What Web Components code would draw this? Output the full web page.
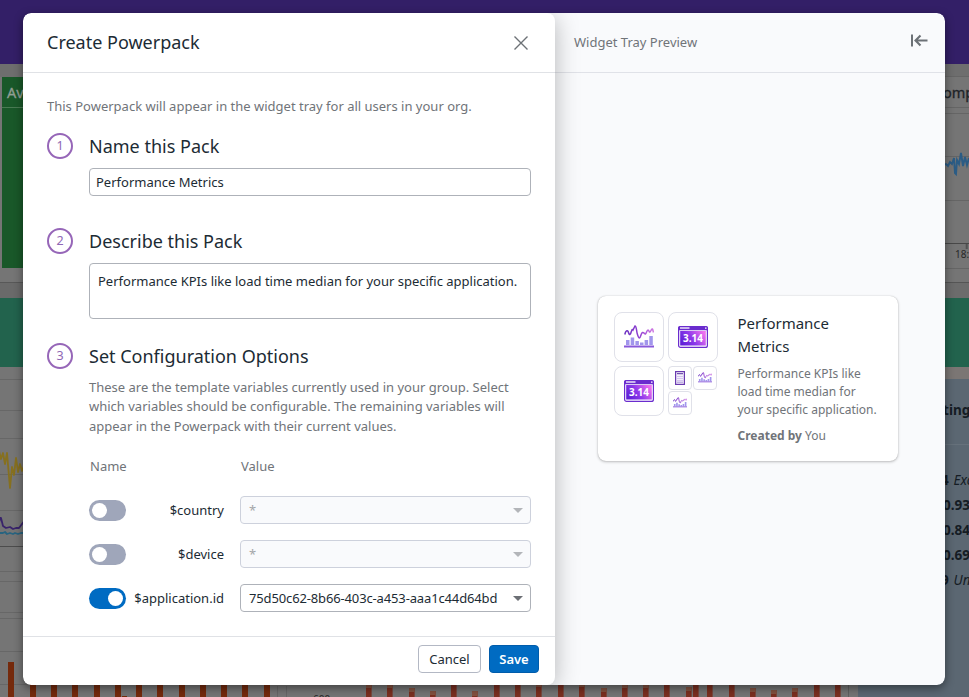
<!DOCTYPE html>
<html lang="en">
<head>
<meta charset="utf-8">
<title>Create Powerpack</title>
<style>
html,body{margin:0;height:100%;overflow:hidden}
body{font-family:"Noto Sans","Open Sans",sans-serif;font-size:13px;color:#1c2b34}
</style>
</head>
<body>
<app-stage></app-stage>
<script>
const define=(name,html,setup)=>customElements.define(name,class extends HTMLElement{
  connectedCallback(){
    if(this.shadowRoot)return;
    const root=this.attachShadow({mode:'open'});
    root.innerHTML=typeof html==='function'?html(this):html;
    if(setup)setup(this,root);
  }
});

/* Dimmed dashboard: a free canvas of chart fragments */
define('dash-backdrop',()=>{
  const left=[[8,662],[30,680],[51,680],[72,680],[94,680],[115,680],[136,680],[157,680],[179,680],[200,680],[221,680],[242,680],[264,680]]
    .map(([x,y])=>`<rect x="${x}" y="${y}" width="6" height="${697-y}" fill="#752a0c"/>`).join('')+'<rect x="122" y="696" width="5" height="1" fill="#752a0c"/>';
  const right=[[366,685,3],[387,685,3],[409,688,4],[430,691,4],[451,680,0],[472,691,5],[494,680,0],[515,680,0],[536,685,2],[558,680,0],[579,685,2],[601,688,4],[622,684,4],[643,684,4],[664,680,0],[686,687,4],[693,680,0],[707,680,0],[729,680,0],[750,688,4],[771,690,4],[792,688,4],[814,680,0],[835,680,0]]
    .map(([x,y,t])=>`<rect x="${x}" y="${y}" width="5.6" height="${697-y}" fill="#7b2f20"/>`+(t?`<rect x="${x}" y="${y}" width="5.6" height="${t}" fill="#835240"/>`:'')).join('');
  return `<style>
:host{display:block;position:absolute;inset:0}
svg{display:block;width:969px;height:697px}
</style>
<svg viewBox="0 0 969 697" font-family="Noto Sans, sans-serif">
<rect width="969" height="697" fill="#757575"/>
<rect width="969" height="64" fill="#331f67"/>
<rect y="64" width="969" height="13" fill="#6e6e6e"/>
<rect x="2" y="77" width="60" height="191" fill="#195829"/>
<path d="M2 107.5H40" stroke="#497b53"/>
<text x="7" y="98" font-size="14.5" fill="#929e94" stroke="#929e94" stroke-width=".3">Av</text>
<path d="M0 282.5H60" stroke="#585858"/><rect y="283" width="60" height="15" fill="#6a6a6a"/>
<rect y="298" width="60" height="69" fill="#22634d"/>
<g stroke="#676767"><path d="M0 379.5H60M0 410.5H60M0 438.5H60M0 474.5H60M0 510.5H60M0 571.5H60M0 581.5H60M0 612.5H60M0 618.5H60M0 651.5H60M0 684.5H60"/></g>
<path d="M0 546.5H60" stroke="#4c4c4c"/>
<g fill="none" stroke-width="1.8" stroke-linejoin="round">
<path d="M-2 447l3 12 2-6 2 11 2-11 3 35 2-21 2 8 2-17 2 14 2-8 2 7 2-5 2-13 2-5" stroke="#86701f"/>
<path d="M-1 523l1-5 1 0 2 8 3 2 4-1 3 2 3-1 3 0 3-4 3-4" stroke="#39246b"/>
<path d="M0 533h3l2-1 2 2 3-1 3 1 2-1 3 1 3-1h5" stroke="#286480"/>
</g>
${left}
<path d="M277.5 686V697M286.5 686V697" stroke="#676767"/>
<text x="313" y="703" font-size="10" fill="#252525">600</text>
${right}
<path d="M848.500 684V697" stroke="#606060"/>
<g stroke="#656565"><path d="M940 76.500H969M940 107.500H969M940 113.500H969M940 156.500H969M940 200.500H969M940 268.500H969"/><path d="M940 282.500H969" stroke="#555"/></g>
<path d="M940 243.500H969" stroke="#484848"/><path d="M966.700 244V249" stroke="#525252" stroke-width="2"/>
<text x="943" y="98" font-size="14.500" fill="#1f2428" stroke="#1f2428" stroke-width=".3">omp</text>
<path d="M943 165l3-1 2 2 2-4 2 2 2-6 1 15 1 1 1-14 2 4 2-11 2 13 2-9 2 8 2-7" fill="none" stroke="#2b5c85" stroke-width="1.900"/>
<text x="955" y="258" font-size="10" fill="#282828">18:</text>
<rect x="940" y="283" width="29" height="15" fill="#6c6c6c"/>
<rect x="940" y="298" width="29" height="69" fill="#22634d"/>
<rect x="940" y="367" width="29" height="13" fill="#7b7674"/>
<path d="M940 379h29V697H858V670h82z" fill="#5b6772"/>
<path d="M940 444.500H969" stroke="#66717b"/>
<g font-size="13.500" font-weight="700" fill="#151c24">
<text x="935" y="415">ating</text>
<text x="941" y="485">4</text><text x="943" y="510">0.93</text><text x="943" y="535">0.84</text><text x="943" y="560">0.69</text><text x="941" y="585">9</text>
<g font-weight="400" font-style="italic"><text x="953.500" y="485">Exc</text><text x="953.500" y="585">Un</text></g>
</g>
</svg>`});

define('icon-button',e=>{
  const icons={
    close:'<path d="M1.500 1.500L14.500 14.500M14.500 1.500L1.500 14.500" stroke-width="1.400"/>',
    collapse:'<path d="M1 1.500V13.500" stroke-width="2"/><path d="M16.500 7.500H4.800M9.500 2.500L4.500 7.500L9.500 12.500" stroke-width="2.100"/>'
  };
  const k=e.getAttribute('icon');
  return `<style>:host{display:block}svg{display:block}</style><svg width="${k==='close'?16:17}" height="16" viewBox="0 0 ${k==='close'?16:17} 16" fill="none" stroke="#6c7176">${icons[k]}</svg>`});

define('pack-step',e=>`<style>
:host{display:grid;grid-template-columns:26px 1fr;column-gap:16px}
.n{box-sizing:border-box;width:26px;height:26px;border:2px solid #9666b8;border-radius:50%;color:#8f67b5;display:flex;align-items:center;justify-content:center;font-size:12.5px;line-height:22px}
h3{margin:0;font-size:18px;font-weight:400;line-height:26px}
.c{grid-column:2;min-width:0}
</style><div class="n">${e.getAttribute('number')}</div><h3>${e.getAttribute('heading')}</h3><div class="c"><slot></slot></div>`);

define('text-field',`<style>
:host{display:block;box-sizing:border-box;height:var(--h,28px);border:1px solid #aeb2b9;border-radius:4px;background:#fff;padding:var(--p,0 6px);line-height:26px;white-space:nowrap}
</style><slot></slot>`);

define('toggle-switch',`<style>
:host{display:block;box-sizing:border-box;width:37px;height:21px;border-radius:11px;background:#9fa6ba;padding:3px}
i{display:block;width:15px;height:15px;border-radius:50%;background:#fff}
:host([on]){background:#006bc2}
:host([on]) i{margin-left:16px}
</style><i></i>`);

define('select-box',`<style>
:host{box-sizing:border-box;display:flex;align-items:center;justify-content:space-between;height:28px;border:1px solid #aeb2b9;border-radius:4px;padding:0 7.5px 0 8px;line-height:26px;color:#1c2b34;background:#fff;letter-spacing:-.14px}
:host([disabled]){background:#f9fafc;border-color:#cdd1dc;color:#a4a6a9}
i{border:5px solid transparent;border-top:5px solid #6c6f75;border-bottom:0}
:host([disabled]) i{border-top-color:#b3b5b9}
</style><span><slot></slot></span><i></i>`);

define('variable-row',e=>`<style>
:host{display:grid;grid-template-columns:37px 98px 291px;column-gap:0;align-items:center;height:28px}
span{text-align:right;white-space:nowrap}
select-box{margin-left:16px;width:291px}
</style><toggle-switch ${e.hasAttribute('on')?'on':''}></toggle-switch><span>${e.getAttribute('name')}</span><select-box ${e.hasAttribute('on')?'':'disabled'}><slot></slot></select-box>`);

define('push-button',`<style>
:host{box-sizing:border-box;display:flex;align-items:center;justify-content:center;height:28px;width:63px;border:1px solid #b3b8c4;border-radius:4px;background:#fff}
:host([primary]){width:50px;background:#006bc2;border-color:#005cab;color:#fff;font-weight:600}
</style><slot></slot>`);

define('powerpack-form',`<style>
:host{box-sizing:border-box;display:flex;flex-direction:column;width:532px;height:672px;background:#fff;border-radius:8px;box-shadow:0 4px 24px rgba(0,0,0,.28);position:relative;z-index:1}
header{box-sizing:border-box;height:60px;border-bottom:1px solid #e0e2e6;display:flex;align-items:center;justify-content:space-between;padding:0 26px 0 24px;font-size:18px}
header span{padding-bottom:2px}
main{flex:1;padding:23px 24px 0}
.intro{line-height:20px;height:20px;margin:0 0 17px;color:#707479;white-space:nowrap}
text-field{margin-top:9px}
.desc{margin:8.500px 0 20px;line-height:19.500px;color:#707479;white-space:nowrap}
.cols{display:grid;grid-template-columns:151px 1fr;line-height:20px;color:#707479;padding-left:1px;margin-bottom:20px}
.rows{display:grid;gap:16px}
footer{box-sizing:border-box;height:49px;border-top:1px solid #e0e2e6;display:flex;justify-content:flex-end;gap:8px;padding:8px 16px}
</style>
<header><span>Create Powerpack</span><icon-button icon="close"></icon-button></header>
<main>
<p class="intro">This Powerpack will appear in the widget tray for all users in your org.</p>
<pack-step number="1" heading="Name this Pack"><text-field>Performance Metrics</text-field></pack-step>
<pack-step number="2" heading="Describe this Pack" style="margin-top:32px"><text-field style="--h:56px;--p:4px 8px">Performance KPIs like load time median for your specific application.</text-field></pack-step>
<pack-step number="3" heading="Set Configuration Options" style="margin-top:24px">
<p class="desc">These are the template variables currently used in your group. Select<br>which variables should be configurable. The remaining variables will<br>appear in the Powerpack with their current values.</p>
<div class="cols"><span>Name</span><span>Value</span></div>
<div class="rows">
<variable-row name="$country">*</variable-row>
<variable-row name="$device">*</variable-row>
<variable-row name="$application.id" on>75d50c62-8b66-403c-a453-aaa1c44d64bd</variable-row>
</div>
</pack-step>
</main>
<footer><push-button>Cancel</push-button><push-button primary>Save</push-button></footer>`);

define('widget-tile',e=>{
  const small=e.hasAttribute('small'),k=e.getAttribute('kind');
  const art={
  chart:`<svg width="${small?14:30}" height="${small?11:24}" viewBox="0 0 30 24" preserveAspectRatio="none"><defs><linearGradient id="g"><stop stop-color="#6a2fc0"/><stop offset=".5" stop-color="#9040d2"/><stop offset="1" stop-color="#cf78e2"/></linearGradient></defs><path d="M.8 9.500C1.500 6 3.500 4 4.500 7.500S6.500 9.800 7.500 6Q8 3.500 9 5L11 1C12.500 1 12.500 6 13.200 8.500S14.500 13 15.500 13S17 8 18.500 7.500S20.500 9.500 21.500 9S22.800 5 24 5S25 7.500 26 7S27.500 3.500 28.300 4S29 6.500 29.500 7.500" fill="none" stroke="url(#g)" stroke-width="${small?2:1.500}"/><path d="M2 15h3.500v5H2zM6.700 12.500h3.500V20H6.700zM11.400 16h3.500v4h-3.500zM16 17.500h3.500V20H16zM20.600 15h3.500v5h-3.500zM25.300 11h3.500v9h-3.500z" fill="#a196ec"/><path d="M0 20.500h30v2H0z" fill="#8959da"/></svg>`,
  value:`<svg width="30" height="22" viewBox="0 0 30 22"><defs><linearGradient id="v" x1="0" y1=".7" x2="1" y2=".3"><stop stop-color="#5f20d8"/><stop offset=".45" stop-color="#8c38ea"/><stop offset="1" stop-color="#ee72ee"/></linearGradient></defs><rect x=".6" y=".6" width="28.800" height="20.800" rx="2" fill="#fff" stroke="#6a2cce" stroke-width="1.200"/><path d="M0 4.200V2Q0 0 2 0H28Q30 0 30 2V4.200z" fill="#6a2cce"/><path d="M2 2H11.500" stroke="#fff" stroke-width="1.300"/><path d="M27 2.200h1.500" stroke="#fff" stroke-width="1.300"/><rect x="2.200" y="5" width="25.600" height="14.500" fill="url(#v)"/><text x="15" y="16.400" text-anchor="middle" font-family="Noto Sans,sans-serif" font-weight="700" font-size="10" fill="#fff">3.14</text></svg>`,
  doc:`<svg width="10" height="14" viewBox="0 0 10 14"><rect x=".6" y=".6" width="8.800" height="12.800" fill="#f4effc" stroke="#6a3ab0" stroke-width="1.200"/><path d="M2 2.700h6" stroke="#54309c"/><path d="M2 5.500h6M2 7.500h6M2 9.500h6" stroke="#d4c5ef"/><path d="M2 11.200h6" stroke="#a993d9"/></svg>`};
  return `<style>
:host{box-sizing:border-box;display:flex;align-items:center;justify-content:center;width:50px;height:50px;border:1px solid #e0e1e9;border-radius:8px;background:#fff}
:host([small]){width:24px;height:24px;border-radius:4px}
svg{display:block}
</style>${art[k]}`});

define('pack-card',`<style>
:host{box-sizing:border-box;display:grid;grid-template-columns:104px 1fr;column-gap:19.5px;width:300px;height:165px;padding:16px 16px 0;border-radius:8px;background:#fff;box-shadow:0 0 1px rgba(0,0,0,.25),0 1px 3px rgba(0,0,0,.24)}
.tiles{display:grid;grid-template-columns:50px 50px;gap:4px;align-content:start}
.mini{display:grid;grid-template-columns:24px 24px;gap:1px;align-content:start}
h4{margin:0 0 7px;font-size:15px;line-height:23px;font-weight:400}
p{margin:0;font-size:12px;line-height:18px;color:#707479;white-space:nowrap}
.by{margin-top:8px}
b{font-weight:700}
</style>
<div class="tiles"><widget-tile kind="chart"></widget-tile><widget-tile kind="value"></widget-tile><widget-tile kind="value"></widget-tile>
<div class="mini"><widget-tile small kind="doc"></widget-tile><widget-tile small kind="chart"></widget-tile><widget-tile small kind="chart"></widget-tile></div></div>
<div><h4>Performance<br>Metrics</h4><p>Performance KPIs like<br>load time median for<br>your specific application.</p><p class="by"><b>Created by</b> You</p></div>`);

define('tray-preview',`<style>
:host{box-sizing:border-box;display:flex;flex-direction:column;width:398px;margin-left:-8px;height:672px;background:#f9fafc;border-radius:0 8px 8px 0}
header{box-sizing:border-box;height:60px;border-bottom:1px solid #e0e2e8;display:flex;align-items:center;justify-content:space-between;padding:0 17px 0 27px;color:#707479}
header span{padding-bottom:2px}
icon-button{margin-top:-4px}
main{flex:1;display:flex;align-items:center;padding:0 0 2px 51px}
</style>
<header><span>Widget Tray Preview</span><icon-button icon="collapse"></icon-button></header>
<main><pack-card></pack-card></main>`);

define('app-stage',`<style>
:host{display:block;position:relative;width:969px;height:697px;overflow:hidden}
.modal{position:absolute;left:23px;top:13px;width:922px;height:672px;display:flex;border-radius:8px;box-shadow:0 3px 10px rgba(0,0,0,.45)}
.clip{display:flex;width:922px;height:672px;overflow:hidden;border-radius:8px}
</style>
<dash-backdrop></dash-backdrop>
<div class="modal"><div class="clip"><powerpack-form></powerpack-form><tray-preview></tray-preview></div></div>`);
</script>
</body>
</html>
